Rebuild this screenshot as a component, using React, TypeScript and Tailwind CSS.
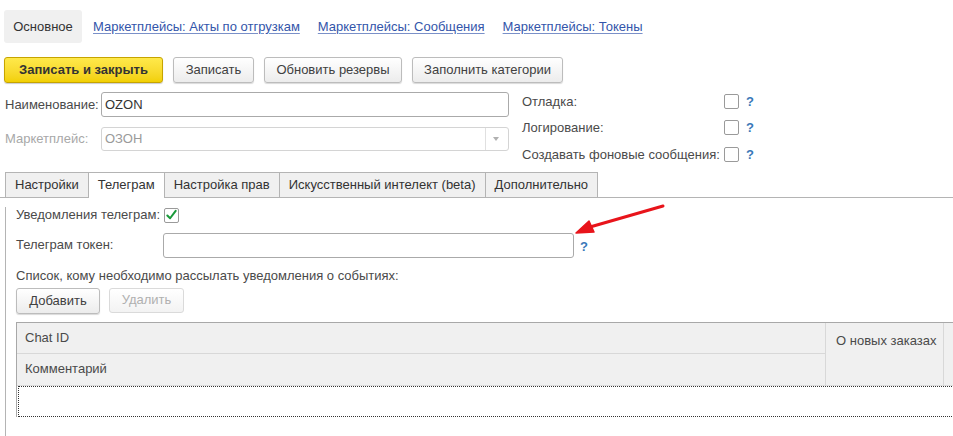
const btn =
  "h-[26px] flex items-center justify-center whitespace-nowrap rounded-[3px] border border-[#bcbcbc] bg-gradient-to-b from-white to-[#ececec] shadow-[0_1px_1px_rgba(0,0,0,0.15)] text-[#404040]"

function Checkbox({ checked = false }: { checked?: boolean }) {
  return (
    <div className="w-[15px] h-[15px] rounded-[2px] border border-[#9a9a9a] bg-white flex items-center justify-center">
      {checked && (
        <svg viewBox="0 0 14 14" className="w-[14px] h-[14px]">
          <path d="M2.5 7.5 L5.5 10.5 L11.5 2.5" fill="none" stroke="#1a9a3a" strokeWidth="2.2" strokeLinecap="round" strokeLinejoin="round" />
        </svg>
      )}
    </div>
  )
}

function Help() {
  return <span className="text-[#3a78b8] font-bold text-[13px]">?</span>
}

const tabs = ["Настройки", "Телеграм", "Настройка прав", "Искусственный интелект (beta)", "Дополнительно"]

export default function App() {
  return (
    <div className="relative w-[953px] h-[436px] overflow-hidden bg-white font-['Liberation_Sans',Arial,sans-serif] text-[13px] text-[#4a4a4a]">
      {/* Navigation */}
      <div className="mt-[10px] flex items-center h-[33px] pl-[4px]">
        <div className="h-full w-[78px] rounded-[3px] bg-[#f0f0f0] flex items-center justify-center text-[#333]">Основное</div>
        <a className="ml-[11px] text-[#3355aa] underline decoration-[#7a90c8] underline-offset-2">Маркетплейсы: Акты по отгрузкам</a>
        <a className="ml-[18px] text-[#3355aa] underline decoration-[#7a90c8] underline-offset-2">Маркетплейсы: Сообщения</a>
        <a className="ml-[18px] text-[#3355aa] underline decoration-[#7a90c8] underline-offset-2">Маркетплейсы: Токены</a>
      </div>

      {/* Command bar */}
      <div className="mt-[14px] pl-[4px] flex gap-[10px]">
        <button className="h-[26px] w-[159px] flex items-center justify-center whitespace-nowrap rounded-[3px] border border-[#c6a400] bg-gradient-to-b from-[#ffe94a] to-[#f2d000] shadow-[0_1px_1px_rgba(0,0,0,0.2)] font-bold text-[#333]">
          Записать и закрыть
        </button>
        <button className={`${btn} w-[81px]`}>Записать</button>
        <button className={`${btn} w-[138px]`}>Обновить резервы</button>
        <button className={`${btn} w-[151px]`}>Заполнить категории</button>
      </div>

      {/* Header fields */}
      <div className="mt-[9px] flex">
        <div className="w-[509px] pl-[5px] flex flex-col gap-[10px]">
          <div className="flex items-center h-[25px]">
            <span className="w-[96px]">Наименование:</span>
            <div className="flex-1 h-[25px] rounded-[3px] border border-[#aaa] px-[3px] flex items-center text-[#333]">OZON</div>
          </div>
          <div className="flex items-center h-[24px]">
            <span className="w-[96px] text-[#a8a8a8]">Маркетплейс:</span>
            <div className="flex-1 h-[24px] rounded-[3px] border border-[#d4d4d4] px-[3px] flex items-center text-[#9a9a9a]">
              <span className="flex-1">ОЗОН</span>
              <div className="w-[20px] h-full border-l border-[#e0e0e0] flex items-center justify-center">
                <svg viewBox="0 0 6 4" className="w-[6px] h-[4px]"><path d="M0 0 L6 0 L3 4 Z" fill="#b0b0b0" /></svg>
              </div>
            </div>
          </div>
        </div>
        <div className="ml-[13px] mt-[-4px] flex flex-col">
          {["Отладка:", "Логирование:", "Создавать фоновые сообщения:"].map((l) => (
            <div key={l} className="flex items-center h-[26.5px]">
              <span className="w-[202px]">{l}</span>
              <Checkbox />
              <span className="ml-[7px]"><Help /></span>
            </div>
          ))}
        </div>
      </div>

      {/* Tabs */}
      <div className="mt-[4px] pl-[5px] flex items-end h-[26px] border-b border-[#b4b4b4]">
        {tabs.map((t, i) => (
          <div
            key={t}
            className={
              i === 1
                ? "h-[26px] px-[9px] flex items-center border border-b-0 border-[#b4b4b4] bg-white text-[#333] -mb-px -mr-px relative z-10"
                : "h-[25px] px-[9px] flex items-center border border-b-0 border-[#b4b4b4] bg-[#f0f0f0] text-[#333] -mr-px"
            }
          >
            {t}
          </div>
        ))}
      </div>

      {/* Tab body */}
      <div className="ml-[5px] border-l border-[#b4b4b4] pl-[10px] h-[240px]">
        <div className="mt-[9px] flex items-center h-[17px]">
          <span className="w-[148px]">Уведомления телеграм:</span>
          <Checkbox checked />
        </div>
        <div className="mt-[9px] flex items-center h-[25px]">
          <span className="w-[147px]">Телеграм токен:</span>
          <div className="w-[411px] h-[25px] rounded-[3px] border border-[#aaa] bg-white" />
          <span className="ml-[6px] mt-[4px]"><Help /></span>
        </div>
        <div className="mt-[10px] h-[16px] flex items-center">Список, кому необходимо рассылать уведомления о событиях:</div>
        <div className="mt-[4px] flex gap-[9px]">
          <button className={`${btn} w-[84px] h-[25px]`}>Добавить</button>
          <button className="h-[25px] w-[75px] flex items-center justify-center rounded-[3px] border border-[#dadada] bg-gradient-to-b from-white to-[#f3f3f3] text-[#b0b0b0]">
            Удалить
          </button>
        </div>

        {/* Table */}
        <div className="mt-[8px] w-[1000px] border-t border-l border-[#a8a8a8]">
          <div className="flex bg-[#f0f0f0] border-b border-[#dcdcdc]">
            <div className="w-[808px] shrink-0 flex flex-col">
              <div className="h-[31px] pl-[8px] flex items-center border-b border-[#d8d8d8]">Chat ID</div>
              <div className="h-[31px] pl-[8px] flex items-center">Комментарий</div>
            </div>
            <div className="w-[118px] shrink-0 h-[62px] border-l border-[#d8d8d8] pl-[10px] pt-[8px] whitespace-nowrap">О новых заказах</div>
            <div className="flex-1 h-[62px] border-l border-[#d8d8d8] pl-[10px] pt-[8px] whitespace-nowrap">Об отменах</div>
          </div>
          <div className="h-[31px] border-y border-dotted border-[#333] border-l border-l-[#333] ml-[1px]" />
        </div>
      </div>

      {/* Red arrow annotation */}
      <svg className="absolute left-[568px] top-[200px]" width="100" height="40" viewBox="0 0 100 40">
        <path d="M95 6 L22 27" stroke="#e8141b" strokeWidth="3" strokeLinecap="round" />
        <path d="M8 33 L21 21 L26 32 Z" fill="#e8141b" stroke="#e8141b" strokeWidth="1.5" strokeLinejoin="round" />
      </svg>
    </div>
  )
}
